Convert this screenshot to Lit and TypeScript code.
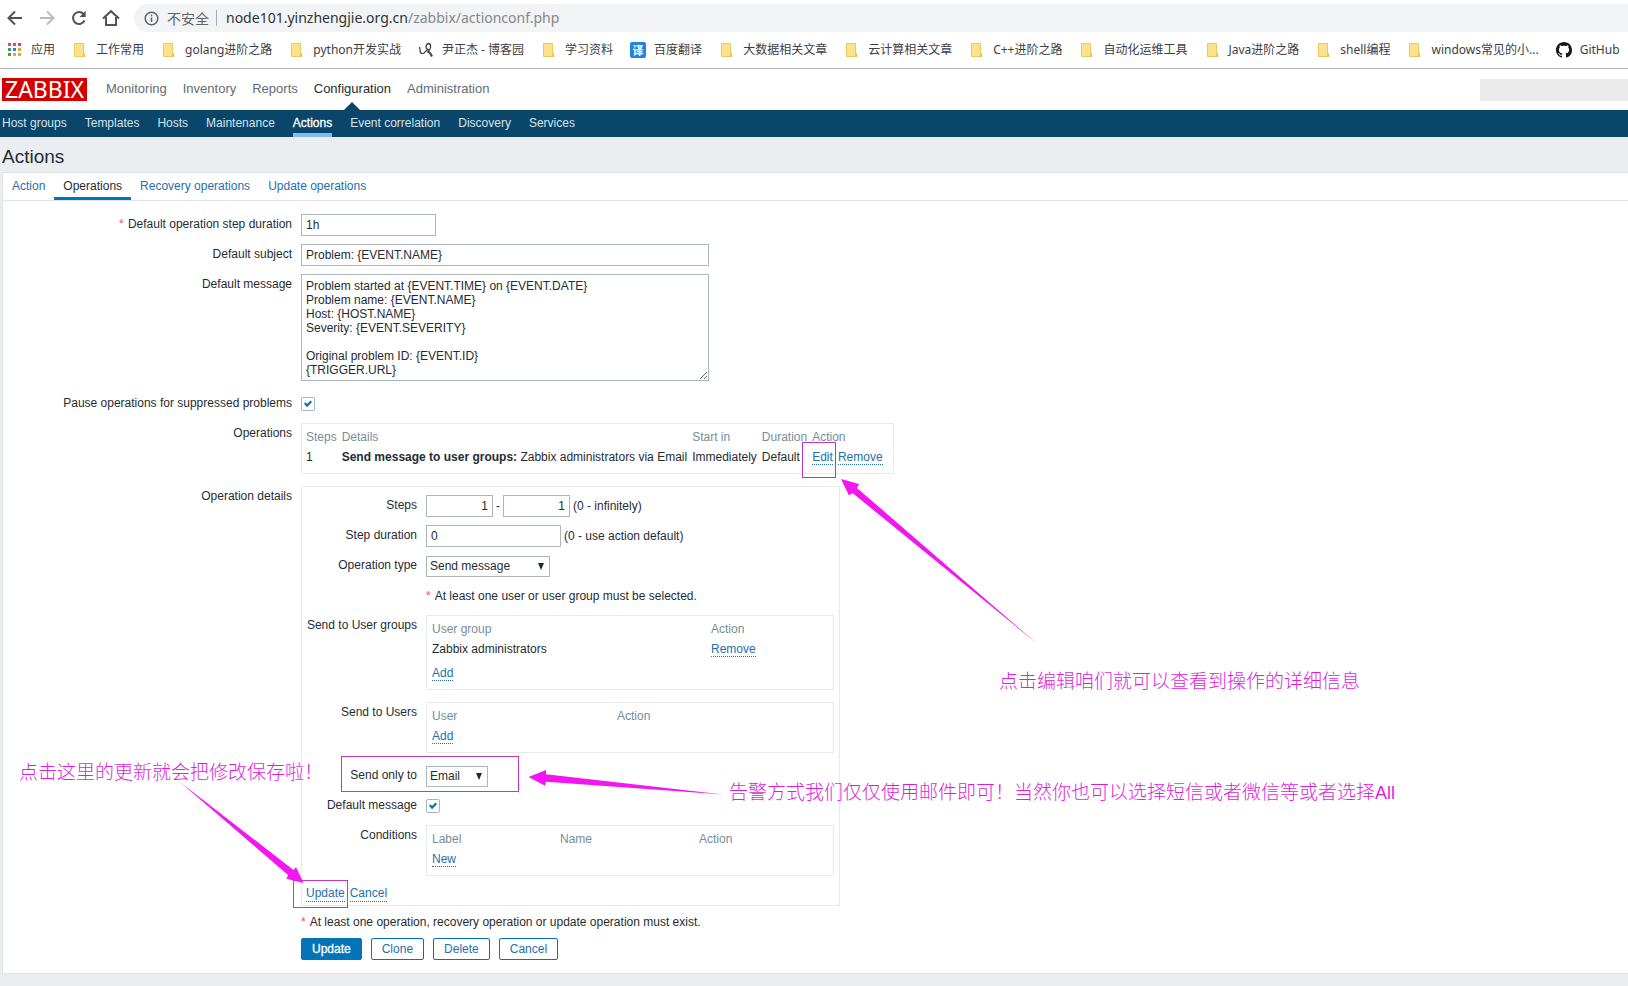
import { LitElement, html, css, svg } from "lit";
import { customElement, state } from "lit/decorators.js";
import { classMap } from "lit/directives/class-map.js";

type IconName = "apps" | "folder" | "blog" | "translate" | "github";

interface Bookmark {
  icon: IconName;
  label: string;
}

const BOOKMARKS: Bookmark[] = [
  { icon: "apps", label: "应用" },
  { icon: "folder", label: "工作常用" },
  { icon: "folder", label: "golang进阶之路" },
  { icon: "folder", label: "python开发实战" },
  { icon: "blog", label: "尹正杰 - 博客园" },
  { icon: "folder", label: "学习资料" },
  { icon: "translate", label: "百度翻译" },
  { icon: "folder", label: "大数据相关文章" },
  { icon: "folder", label: "云计算相关文章" },
  { icon: "folder", label: "C++进阶之路" },
  { icon: "folder", label: "自动化运维工具" },
  { icon: "folder", label: "Java进阶之路" },
  { icon: "folder", label: "shell编程" },
  { icon: "folder", label: "windows常见的小..." },
  { icon: "github", label: "GitHub" },
];

const APP_COLORS = ["#d9534a", "#d9534a", "#c94f46", "#3f9a5c", "#3b7ddd", "#e0a82e", "#3f9a5c", "#e0a82e", "#e0a82e"];

@customElement("browser-bar")
export class BrowserBar extends LitElement {
  static styles = css`
    :host {
      display: block;
      background: #fff;
      border-bottom: 1px solid #b4b4b6;
      overflow: hidden;
    }
    svg {
      display: block;
      flex: none;
    }
    .toolbar {
      display: flex;
      align-items: center;
      gap: 14px;
      padding: 4px 0 0 6px;
    }
    .tool {
      display: block;
      padding: 0;
      border: 0;
      background: none;
    }
    .address {
      flex: 1;
      display: flex;
      align-items: center;
      height: 28px;
      box-sizing: border-box;
      padding-left: 10px;
      border-radius: 14px 0 0 14px;
      background: #f1f3f4;
      font: 14px/20px "Noto Sans CJK SC", sans-serif;
      color: #5f6368;
    }
    .insecure {
      margin: 0 7px 0 8px;
      padding-right: 7px;
      border-right: 1px solid #a9adb1;
      line-height: 16px;
    }
    .url {
      font: 14px/20px "Noto Sans", sans-serif;
      color: #85898d;
      margin-left: 2px;
    }
    .host {
      color: #303236;
    }
    .bookmarks {
      display: flex;
      align-items: center;
      gap: 17px;
      height: 36px;
      padding-left: 7px;
    }
    .bookmark {
      display: flex;
      align-items: center;
      gap: 8px;
      flex: none;
      color: #3c4043;
      font: 12px/18px "Noto Sans", "Noto Sans CJK SC", sans-serif;
      white-space: nowrap;
      text-decoration: none;
    }
    .glyph {
      width: 16px;
      border-radius: 2px;
      background: #2381e2;
      color: #fff;
      font: 700 11px/16px "Noto Sans CJK SC", sans-serif;
      text-align: center;
    }
  `;

  private icon(name: IconName) {
    switch (name) {
      case "apps":
        return html`<svg width="16" height="16" viewBox="0 0 16 16">
          ${APP_COLORS.map(
            (c, i) => svg`<rect x=${1 + (i % 3) * 5} y=${1 + Math.floor(i / 3) * 5} width="3" height="3" fill=${c}></rect>`
          )}
        </svg>`;
      case "folder":
        return html`<svg width="16" height="16" viewBox="0 0 16 16">
          <path d="M2.5 1.5h9v8.500l1.500 4.500h-10.500z" fill="#fbe38e" stroke="#ecc95c"></path>
          <path d="M11.500 9.500v5h1.800z" fill="#e0b63f"></path>
        </svg>`;
      case "blog":
        return html`<svg width="16" height="16" viewBox="0 0 16 16" fill="none" stroke="#444" stroke-width="1.300">
          <path d="M1.500 5l1 5.500q1.500 2 3.500.500l4-4"></path>
          <path d="M12.500 7.500q-4 1-4.500-2.500.3-3.500 3-3.500 2 .5 1.500 4-.5 3-3 4.500"></path>
          <path d="M9.500 9.500q2.500.5 4.500 5" stroke-width="2"></path>
        </svg>`;
      case "translate":
        return html`<span class="glyph">译</span>`;
      case "github":
        return html`<svg width="16" height="16" viewBox="0 0 16 16" fill="#171515">
          <path
            d="M8 0C3.580 0 0 3.580 0 8c0 3.540 2.290 6.530 5.470 7.590.4.070.55-.17.55-.38 0-.19-.01-.82-.01-1.490-2.010.37-2.530-.49-2.690-.94-.09-.23-.48-.94-.82-1.130-.28-.15-.68-.52-.01-.53.63-.01 1.080.58 1.230.82.72 1.210 1.870.87 2.330.66.07-.52.28-.87.51-1.070-1.780-.2-3.640-.89-3.640-3.950 0-.87.31-1.590.82-2.150-.08-.2-.36-1.020.08-2.120 0 0 .67-.21 2.200.82.64-.18 1.320-.27 2-.27s1.360.09 2 .27c1.530-1.040 2.200-.82 2.200-.82.44 1.100.16 1.920.08 2.120.51.56.82 1.270.82 2.150 0 3.070-1.870 3.750-3.650 3.950.29.25.54.73.54 1.480 0 1.070-.01 1.930-.01 2.200 0 .21.15.46.55.38A8.010 8.010 0 0 0 16 8c0-4.420-3.580-8-8-8z"
          ></path>
        </svg>`;
    }
  }

  render() {
    return html`
      <div class="toolbar">
        <button class="tool" aria-label="Back">
          <svg width="18" height="18" viewBox="0 0 18 18" fill="none" stroke="#505357" stroke-width="2">
            <path d="M16 9H3M9 2.500L2.500 9 9 15.500"></path>
          </svg>
        </button>
        <button class="tool" aria-label="Forward">
          <svg width="18" height="18" viewBox="0 0 18 18" fill="none" stroke="#b9bbbe" stroke-width="2">
            <path d="M2 9h13M9 2.500L15.500 9 9 15.500"></path>
          </svg>
        </button>
        <button class="tool" aria-label="Reload">
          <svg width="18" height="18" viewBox="0 0 18 18" fill="none" stroke="#505357" stroke-width="2">
            <path d="M14.500 11.500A6 6 0 1 1 13.500 5"></path>
            <path d="M15.700 1.800v6.200H9.500z" fill="#505357" stroke="none"></path>
          </svg>
        </button>
        <button class="tool" aria-label="Home">
          <svg width="18" height="18" viewBox="0 0 18 18" fill="none" stroke="#505357" stroke-width="2">
            <path d="M1 9.500L9 2.200l8 7.300M4 8v8h10V8"></path>
          </svg>
        </button>
        <div class="address">
          <svg width="15" height="15" viewBox="0 0 15 15" fill="none" stroke="#5f6368" stroke-width="1.500">
            <circle cx="7.500" cy="7.500" r="6.300"></circle>
            <path d="M7.500 6.500v4.500M7.500 3.800v1.500"></path>
          </svg>
          <span class="insecure">不安全</span>
          <span class="url"><span class="host">node101.yinzhengjie.org.cn</span>/zabbix/actionconf.php</span>
        </div>
      </div>
      <nav class="bookmarks">
        ${BOOKMARKS.map((b) => html`<a class="bookmark" href="#">${this.icon(b.icon)}<span>${b.label}</span></a>`)}
      </nav>
    `;
  }
}

@customElement("site-header")
export class SiteHeader extends LitElement {
  static styles = css`
    :host {
      display: block;
    }
    a {
      text-decoration: none;
    }
    .top {
      display: flex;
      align-items: center;
      height: 41px;
      padding-left: 2px;
      background: #fff;
    }
    .logo {
      padding: 0 3px;
      background: #d40000;
      color: #fff;
      font: 23px/23px "Noto Sans", sans-serif;
    }
    .menu {
      display: flex;
      align-self: stretch;
      gap: 16px;
      flex: 1;
      margin-left: 19px;
    }
    .item {
      position: relative;
      color: #5e6c75;
      font-size: 13px;
      line-height: 39px;
    }
    .item.on {
      color: #1f2c33;
    }
    .item.on::after {
      content: "";
      position: absolute;
      left: 50%;
      bottom: 0;
      margin-left: -8px;
      border: 8px solid transparent;
      border-top: 0;
      border-bottom-color: #0a466a;
    }
    .search {
      width: 148px;
      height: 22px;
      box-sizing: border-box;
      border: 0;
      background: #ebebeb;
    }
    .sub {
      display: flex;
      gap: 18px;
      padding-left: 2px;
      background: #0a466a;
    }
    .subitem {
      box-sizing: border-box;
      height: 27px;
      color: #d3e4ee;
      line-height: 26px;
    }
    .subitem.on {
      color: #fff;
      border-bottom: 4px solid #7cbcee;
      -webkit-text-stroke: 0.3px #fff;
    }
  `;

  render() {
    const top = ["Monitoring", "Inventory", "Reports", "Configuration", "Administration"];
    const sub = ["Host groups", "Templates", "Hosts", "Maintenance", "Actions", "Event correlation", "Discovery", "Services"];
    return html`
      <header class="top">
        <a class="logo" href="#">ZABBIX</a>
        <nav class="menu">
          ${top.map((t) => html`<a href="#" class=${classMap({ item: true, on: t === "Configuration" })}>${t}</a>`)}
        </nav>
        <input class="search" type="text" aria-label="Search" />
      </header>
      <nav class="sub">
        ${sub.map((t) => html`<a href="#" class=${classMap({ subitem: true, on: t === "Actions" })}>${t}</a>`)}
      </nav>
    `;
  }
}

const formStyles = css`
  .form {
    display: grid;
    gap: 8px 9px;
    align-items: start;
  }
  .label {
    text-align: right;
    line-height: 14px;
    padding-top: 3px;
    white-space: nowrap;
  }
  .tall {
    margin-bottom: 4px;
  }
  .line {
    display: flex;
    align-items: center;
    gap: 3px;
    min-height: 22px;
  }
  .star {
    margin-right: 1px;
    color: #e45959;
  }
  .text,
  .select,
  .area {
    box-sizing: border-box;
    border: 1px solid #acb6bd;
    border-radius: 0;
    background: #fff;
    color: #1f2c33;
    font: inherit;
    margin: 0;
  }
  .text {
    width: 135px;
    height: 22px;
    padding: 0 4px;
  }
  .text.short {
    width: 67px;
    text-align: right;
  }
  .text.long,
  .area {
    width: 408px;
  }
  .area {
    display: block;
    height: 107px;
    padding: 4px 4px 3px;
    line-height: 14px;
    overflow: hidden;
    resize: both;
  }
  .pick {
    position: relative;
    display: block;
  }
  .pick::after {
    content: "";
    position: absolute;
    right: 6px;
    top: 7px;
    border: 3px solid transparent;
    border-top: 7px solid #1f2c33;
    border-bottom: 0;
    pointer-events: none;
  }
  .select {
    appearance: none;
    display: block;
    height: 21px;
    padding: 0 26px 0 3px;
  }
  .select.wide {
    padding-right: 38px;
  }
  .check {
    appearance: none;
    width: 14px;
    height: 14px;
    margin: 0;
    border: 1px solid #a3b6c2;
    border-radius: 2px;
    background: #fff;
  }
  .check:checked::before {
    content: "";
    display: block;
    width: 8px;
    height: 8px;
    margin: 2px;
    background: #0275a8;
    clip-path: polygon(0 45%, 18% 28%, 38% 50%, 82% 6%, 100% 26%, 38% 90%);
  }
  .box {
    box-sizing: border-box;
    border: 1px solid #e6eaed;
    padding: 3px 5px 6px;
    background: #fff;
  }
  .grid {
    border-collapse: collapse;
  }
  .grid th,
  .grid td {
    padding: 0 5px 0 0;
    height: 20px;
    line-height: 20px;
    text-align: left;
    font-weight: 400;
    white-space: nowrap;
  }
  .grid th {
    color: #768d99;
  }
  .link {
    color: #2270ad;
    text-decoration: none;
    border-bottom: 1px dotted #2270ad;
  }
  .links {
    display: flex;
    gap: 5px;
    line-height: 14px;
  }
`;

@customElement("operation-details")
export class OperationDetails extends LitElement {
  static styles = [
    formStyles,
    css`
      :host {
        display: block;
        width: fit-content;
        box-sizing: border-box;
        border: 1px solid #e6eaed;
        padding: 8px 5px 3px 4px;
      }
      .form {
        grid-template-columns: 111px 408px;
      }
      .wide-first {
        width: 274px;
      }
      .user-first {
        width: 180px;
      }
      .cond-first {
        width: 123px;
      }
      .cond-second {
        width: 134px;
      }
      .grid .add {
        padding-top: 4px;
      }
      .actions {
        margin-top: 10px;
        height: 16px;
      }
    `,
  ];

  render() {
    return html`
      <div class="form">
        <label class="label" for="from">Steps</label>
        <div class="line">
          <input id="from" class="text short" .value=${"1"} />-<input
            class="text short"
            aria-label="Last step"
            .value=${"1"}
          />(0 - infinitely)
        </div>

        <label class="label" for="duration">Step duration</label>
        <div class="line"><input id="duration" class="text" .value=${"0"} />(0 - use action default)</div>

        <label class="label" for="type">Operation type</label>
        <div class="line">
          <span class="pick"
            ><select id="type" class="select wide">
              <option>Send message</option>
            </select></span
          >
        </div>

        <span></span>
        <div class="line"><span class="star">*</span>At least one user or user group must be selected.</div>

        <span class="label">Send to User groups</span>
        <div class="box tall">
          <table class="grid">
            <tr>
              <th class="wide-first">User group</th>
              <th>Action</th>
            </tr>
            <tr>
              <td>Zabbix administrators</td>
              <td><a class="link" href="#">Remove</a></td>
            </tr>
            <tr>
              <td class="add" colspan="2"><a class="link" href="#">Add</a></td>
            </tr>
          </table>
        </div>

        <span class="label">Send to Users</span>
        <div class="box tall">
          <table class="grid">
            <tr>
              <th class="user-first">User</th>
              <th>Action</th>
            </tr>
            <tr>
              <td colspan="2"><a class="link" href="#">Add</a></td>
            </tr>
          </table>
        </div>

        <label class="label" for="media">Send only to</label>
        <div class="line">
          <span class="pick"
            ><select id="media" class="select">
              <option>Email</option>
            </select></span
          >
        </div>

        <label class="label" for="default">Default message</label>
        <div class="line"><input id="default" class="check" type="checkbox" checked /></div>

        <span class="label">Conditions</span>
        <div class="box">
          <table class="grid">
            <tr>
              <th class="cond-first">Label</th>
              <th class="cond-second">Name</th>
              <th>Action</th>
            </tr>
            <tr>
              <td colspan="3"><a class="link" href="#">New</a></td>
            </tr>
          </table>
        </div>
      </div>
      <div class="links actions"><a class="link" href="#">Update</a><a class="link" href="#">Cancel</a></div>
    `;
  }
}

const MESSAGE = `Problem started at {EVENT.TIME} on {EVENT.DATE}
Problem name: {EVENT.NAME}
Host: {HOST.NAME}
Severity: {EVENT.SEVERITY}

Original problem ID: {EVENT.ID}
{TRIGGER.URL}`;

@customElement("action-form")
export class ActionForm extends LitElement {
  static styles = [
    formStyles,
    css`
      :host {
        display: block;
        padding: 13px 0;
      }
      .form {
        grid-template-columns: 289px minmax(0, 1fr);
      }
      .ops {
        width: fit-content;
        padding-left: 4px;
      }
      .foot {
        min-height: 16px;
      }
      .buttons {
        display: flex;
        gap: 9px;
      }
      .button {
        height: 22px;
        box-sizing: border-box;
        padding: 0 10px;
        border: 1px solid #0275b8;
        border-radius: 2px;
        background: #fff;
        color: #2270ad;
        font: inherit;
      }
      .button.main {
        background: #0275b8;
        color: #fff;
        -webkit-text-stroke: 0.3px #fff;
      }
    `,
  ];

  render() {
    return html`
      <form class="form" @submit=${(e: Event) => e.preventDefault()}>
        <label class="label" for="esc"><span class="star">*</span> Default operation step duration</label>
        <div class="line"><input id="esc" class="text" .value=${"1h"} /></div>

        <label class="label" for="subject">Default subject</label>
        <div class="line"><input id="subject" class="text long" .value=${"Problem: {EVENT.NAME}"} /></div>

        <label class="label" for="message">Default message</label>
        <div class="tall"><textarea id="message" class="area" .value=${MESSAGE}></textarea></div>

        <label class="label" for="pause">Pause operations for suppressed problems</label>
        <div class="line"><input id="pause" class="check" type="checkbox" checked /></div>

        <span class="label">Operations</span>
        <div class="box ops tall">
          <table class="grid">
            <tr>
              <th>Steps</th>
              <th>Details</th>
              <th>Start in</th>
              <th>Duration</th>
              <th>Action</th>
            </tr>
            <tr>
              <td>1</td>
              <td><b>Send message to user groups:</b> Zabbix administrators via Email</td>
              <td>Immediately</td>
              <td>Default</td>
              <td><div class="links"><a class="link" href="#">Edit</a><a class="link" href="#">Remove</a></div></td>
            </tr>
          </table>
        </div>

        <span class="label">Operation details</span>
        <operation-details></operation-details>

        <span></span>
        <div class="line foot"><span class="star">*</span>At least one operation, recovery operation or update operation must exist.</div>

        <span></span>
        <div class="buttons">
          <button class="button main">Update</button>
          <button class="button" type="button">Clone</button>
          <button class="button" type="button">Delete</button>
          <button class="button" type="button">Cancel</button>
        </div>
      </form>
    `;
  }
}

@customElement("note-layer")
export class NoteLayer extends LitElement {
  static styles = css`
    :host {
      position: absolute;
      inset: 0;
      pointer-events: none;
      overflow: hidden;
    }
    .shapes {
      position: absolute;
      inset: 0;
      width: 100%;
      height: 100%;
    }
    .note {
      position: absolute;
      color: #dc1edc;
      font: 300 19px/24px "Noto Sans CJK SC", sans-serif;
      white-space: nowrap;
    }
    .edit {
      left: 999px;
      top: 668px;
    }
    .media {
      left: 729px;
      top: 779px;
    }
    .update {
      left: 19px;
      top: 759px;
    }
    .latin {
      font-family: "Liberation Sans", sans-serif;
      font-size: 18px;
      font-weight: 400;
    }
  `;

  render() {
    return html`
      <svg class="shapes">
        <g fill="none" stroke="#c435c4">
          <rect x="802.5" y="442.5" width="33" height="35"></rect>
          <rect x="341.5" y="756.5" width="177" height="35"></rect>
          <rect x="293.5" y="880.5" width="54" height="27"></rect>
        </g>
        <g fill="#f416f0">
          <path d="M841 479L859 484L857 488L1037.500 644L852.500 493L849 495.500Z"></path>
          <path d="M528.500 777L546 770L546 774.300L723 794.500L546 781.700L545 785.800Z"></path>
          <path d="M303.500 883L296 867L293.500 870L180 782L288 875L286.500 878.800Z"></path>
        </g>
      </svg>
      <span class="note edit">点击编辑咱们就可以查看到操作的详细信息</span>
      <span class="note media">告警方式我们仅仅使用邮件即可！当然你也可以选择短信或者微信等或者选择<span class="latin">All</span></span>
      <span class="note update">点击这里的更新就会把修改保存啦！</span>
    `;
  }
}

@customElement("app-root")
export class AppRoot extends LitElement {
  @state() private tab = "Operations";

  static styles = css`
    :host {
      display: block;
      position: relative;
      min-height: 100vh;
      background: #ebeef0;
      color: #1f2c33;
      font: 12px/14px "Liberation Sans", Arial, sans-serif;
    }
    .title {
      margin: 0;
      padding: 4px 0 0 2px;
      font-size: 19px;
      font-weight: 400;
      line-height: 31px;
    }
    .panel {
      margin-left: 2px;
      border: 1px solid #dfe4e7;
      border-right: 0;
      background: #fff;
    }
    .tabs {
      display: flex;
      border-bottom: 1px solid #dfe4e7;
    }
    .tab {
      box-sizing: border-box;
      height: 27px;
      padding: 1px 9px 0;
      border: 0;
      border-bottom: 3px solid transparent;
      background: none;
      color: #2270ad;
      font: inherit;
    }
    .tab.on {
      color: #1f2c33;
      border-bottom-color: #0275b8;
    }
  `;

  render() {
    const tabs = ["Action", "Operations", "Recovery operations", "Update operations"];
    return html`
      <browser-bar></browser-bar>
      <site-header></site-header>
      <h1 class="title">Actions</h1>
      <main class="panel">
        <div class="tabs" role="tablist">
          ${tabs.map(
            (t) => html`<button
              role="tab"
              class=${classMap({ tab: true, on: t === this.tab })}
              @click=${() => (this.tab = t)}
            >
              ${t}
            </button>`
          )}
        </div>
        <action-form></action-form>
      </main>
      <note-layer></note-layer>
    `;
  }
}
